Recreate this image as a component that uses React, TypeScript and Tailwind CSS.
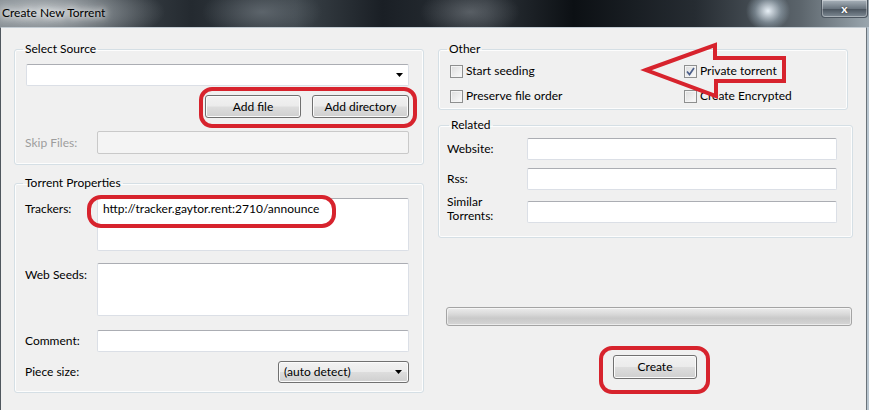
import React from "react";

const font = "font-['Lato','Liberation_Sans',sans-serif]";

const TextBox = ({ className = "", disabled = false }: { className?: string; disabled?: boolean }) => (
  <div
    className={`rounded-[2px] border ${
      disabled
        ? "border-[#c9c9c9] bg-[#f4f4f4]"
        : "border-[#dbdfe6] border-t-[#abadb3] bg-white"
    } ${className}`}
  />
);

const Button = ({ label, className = "" }: { label: string; className?: string }) => (
  <div
    className={`flex items-center justify-center rounded-[3px] border border-[#707070] bg-[linear-gradient(#f2f2f2_0%,#ebebeb_48%,#dddddd_52%,#cfcfcf_100%)] shadow-[inset_0_0_0_1px_#fbfbfb] ${className}`}
  >
    {label}
  </div>
);

const Arrow = () => (
  <svg width="7" height="4" viewBox="0 0 7 4" className="shrink-0">
    <path d="M0 0h7L3.5 4z" fill="#000" />
  </svg>
);

const CheckBox = ({ label, checked = false }: { label: string; checked?: boolean }) => (
  <div className="flex items-center h-[16px]">
    <div className="w-[13px] h-[13px] border border-[#8e8f8f] bg-[linear-gradient(135deg,#dcdcdc,#fbfbfb)] shadow-[inset_0_0_0_1px_#f4f4f4] flex items-center justify-center">
      {checked && (
        <svg width="9" height="9" viewBox="0 0 9 9">
          <path d="M1 4.5l2.5 3L8 1" stroke="#4c5f8a" strokeWidth="1.7" fill="none" />
        </svg>
      )}
    </div>
    <span className="ml-[3px] leading-[16px]">{label}</span>
  </div>
);

const Group = ({
  title,
  className = "",
  legendClass = "ml-[-3px]",
  children,
}: {
  title: string;
  className?: string;
  legendClass?: string;
  children: React.ReactNode;
}) => (
  <fieldset className={`border border-[#d5dfe5] rounded-[3px] shadow-[inset_0_0_0_1px_#fdfdfd] ${className}`}>
    <legend className={`px-[2px] leading-[16px] ${legendClass}`}>{title}</legend>
    {children}
  </fieldset>
);

export default function App() {
  return (
    <div className={`relative w-[869px] h-[410px] overflow-hidden flex flex-col text-[12px] text-black bg-[#b9c6d0] ${font}`}>
      {/* title bar */}
      <div className="h-[27px] shrink-0 flex items-start bg-[radial-gradient(ellipse_22px_20px_at_768px_11px,rgba(240,248,255,0.95),rgba(200,220,235,0.35)_60%,transparent),radial-gradient(ellipse_120px_34px_at_45px_12px,rgba(196,201,204,0.95),rgba(150,157,162,0.6)_55%,transparent),radial-gradient(ellipse_60px_26px_at_262px_12px,rgba(110,118,125,0.7),transparent),radial-gradient(ellipse_50px_24px_at_470px_12px,rgba(120,126,132,0.6),transparent),linear-gradient(90deg,#7b8389_0%,#3a4147_14%,#242a30_22%,#3b4349_34%,#1a1f25_44%,#2c3238_56%,#0c1014_66%,#262c32_80%,#5b646b_92%,#9aa6ae_100%)]">
        <span className="pl-[2px] pt-[5px] leading-[16px] [text-shadow:0_0_6px_#fff,0_0_10px_#fff]">Create New Torrent</span>
        <div className="ml-auto mr-[1px] w-[47px] h-[18px] rounded-b-[4px] border border-t-0 border-[#4c5660] bg-[linear-gradient(#a9b3bb,#6b7680_50%,#4c5660_55%,#7f8b95)] shadow-[inset_0_0_0_1px_rgba(255,255,255,0.35)] flex items-center justify-center">
          <span className="text-white font-bold text-[12px] leading-none [text-shadow:0_0_2px_#333]">x</span>
        </div>
      </div>

      {/* client area */}
      <div className="flex-1 w-[867px] bg-[#f0f0f0] border-l border-r border-t border-l-[#50575e] border-r-[#6a737a] border-t-[#c3ccd3] flex pl-[13px] pt-[13px]">
        {/* left column */}
        <div className="w-[410px] flex flex-col">
          <Group title="Select Source" className="pl-[11px] pr-[14px] pb-[10px]">
            <div className="mt-[7px] h-[22px] bg-white border border-[#dbdfe6] border-t-[#abadb3] rounded-[2px] flex items-center justify-end pr-[5px]">
              <Arrow />
            </div>
            <div className="mt-[9px] flex justify-end gap-[11px]">
              <Button label="Add file" className="w-[96px] h-[23px]" />
              <Button label="Add directory" className="w-[97px] h-[23px]" />
            </div>
            <div className="mt-[13px] flex items-center">
              <span className="w-[71px] ml-[-1px] text-[#9d9d9d]">Skip Files:</span>
              <TextBox disabled className="flex-1 h-[23px] ml-[1px]" />
            </div>
          </Group>

          <Group title="Torrent Properties" className="mt-[10px] pl-[11px] pr-[14px] pb-[9px]">
            <div className="mt-[7px] flex items-start">
              <span className="w-[71px] ml-[-1px] pt-[3px] leading-[16px]">Trackers:</span>
              <div className="flex-1 ml-[1px] h-[53px] bg-white border border-[#dbdfe6] border-t-[#abadb3] rounded-[2px] pl-[5px] pt-[2px] leading-[16px]">
                http://tracker.gaytor.rent:2710/announce
              </div>
            </div>
            <div className="mt-[12px] flex items-start">
              <span className="w-[71px] ml-[-1px] pt-[4px] leading-[16px]">Web Seeds:</span>
              <TextBox className="flex-1 ml-[1px] h-[53px]" />
            </div>
            <div className="mt-[14px] flex items-center">
              <span className="w-[71px] ml-[-1px]">Comment:</span>
              <TextBox className="flex-1 ml-[1px] h-[22px]" />
            </div>
            <div className="mt-[9px] flex items-center">
              <span className="ml-[-1px]">Piece size:</span>
              <div className="ml-auto w-[131px] h-[22px] rounded-[3px] border border-[#707070] bg-[linear-gradient(#f2f2f2_0%,#ebebeb_48%,#dddddd_52%,#cfcfcf_100%)] shadow-[inset_0_0_0_1px_#fbfbfb] flex items-center pl-[5px] pr-[6px]">
                <span className="flex-1">(auto detect)</span>
                <Arrow />
              </div>
            </div>
          </Group>
        </div>

        {/* right column */}
        <div className="ml-[14px] flex flex-col">
          <Group title="Other" className="w-[410px] pl-[11px] pb-[5px]">
            <div className="mt-[6px] grid grid-cols-[234px_1fr] gap-y-[9px]">
              <CheckBox label="Start seeding" />
              <CheckBox label="Private torrent" checked />
              <CheckBox label="Preserve file order" />
              <CheckBox label="Create Encrypted" />
            </div>
          </Group>

          <Group title="Related" legendClass="ml-[2px]" className="mt-[7px] w-[415px] pl-[8px] pr-[15px] pb-[14px]">
            <div className="mt-[5px] flex items-center">
              <span className="w-[80px]">Website:</span>
              <TextBox className="w-[310px] h-[22px]" />
            </div>
            <div className="mt-[8px] flex items-center">
              <span className="w-[80px]">Rss:</span>
              <TextBox className="w-[310px] h-[22px]" />
            </div>
            <div className="mt-[11px] flex items-start">
              <div className="w-[80px] mt-[-6px] flex flex-col">
                <span className="leading-[14px]">Similar</span>
                <span className="leading-[14px]">Torrents:</span>
              </div>
              <TextBox className="w-[310px] h-[22px]" />
            </div>
          </Group>

          <div className="mt-[69px] ml-[8px] w-[406px] h-[19px] rounded-[3px] border border-[#a4a4a4] bg-[linear-gradient(#ececec_0%,#dadada_35%,#c9c9c9_60%,#d6d6d6_100%)] shadow-[inset_0_0_0_1px_rgba(255,255,255,0.55)]" />

          <Button label="Create" className="mt-[29px] ml-[175px] w-[84px] h-[24px]" />
        </div>
      </div>

      {/* red annotations drawn over the dialog */}
      <svg className="absolute inset-0 pointer-events-none" width="869" height="410" viewBox="0 0 869 410">
        <g fill="none" stroke="#d7232d" strokeWidth="4" strokeLinejoin="round">
          <rect x="201" y="89" width="214" height="37" rx="11" />
          <rect x="89" y="197" width="245" height="29" rx="12" />
          <rect x="601" y="348" width="107" height="44" rx="11" />
          <path d="M646 70 L715 45 L715 58 L784 58 L784 81 L716 81 L716 96 Z" strokeLinejoin="miter" />
        </g>
      </svg>
    </div>
  );
}
